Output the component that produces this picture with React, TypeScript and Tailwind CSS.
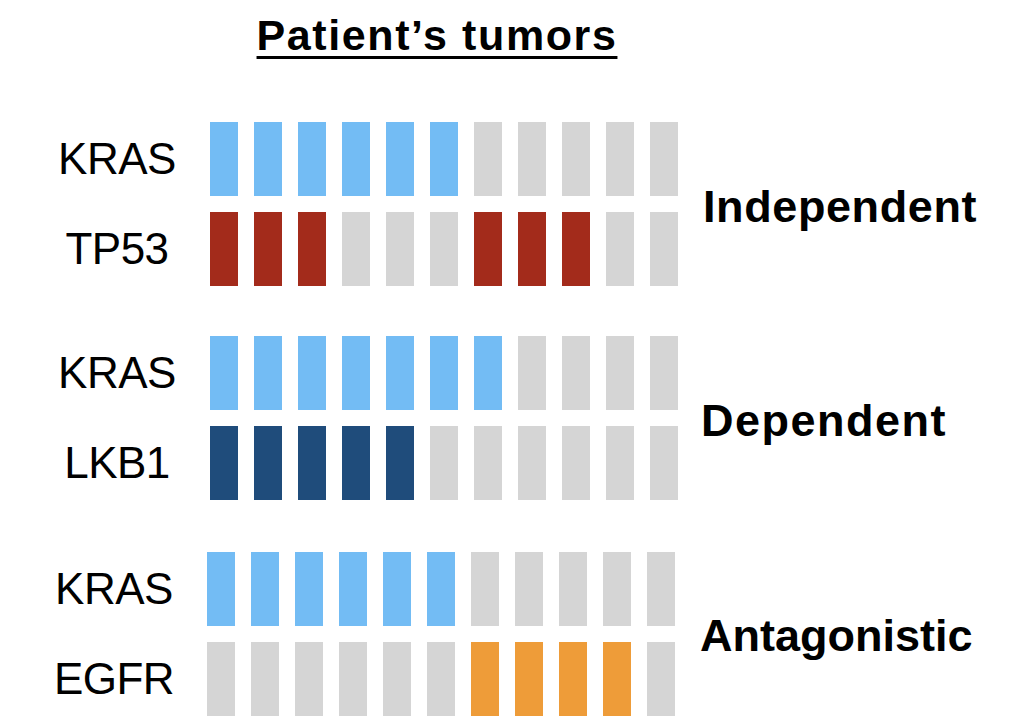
import React from "react";

type Cell = "b" | "r" | "n" | "g" | "o";

const COLORS: Record<Cell, string> = {
  b: "bg-[#73bcf4]",
  r: "bg-[#a32b1b]",
  n: "bg-[#1f4c7b]",
  g: "bg-[#d5d5d5]",
  o: "bg-[#ee9c39]",
};

const groups = [
  {
    label: "Independent",
    className: "",
    labelClass: "ml-[25px] pt-[5px] tracking-[0.6px]",
    rows: [
      { gene: "KRAS", cells: "bbbbbbggggg" },
      { gene: "TP53", cells: "rrrgggrrrgg" },
    ],
  },
  {
    label: "Dependent",
    className: "mt-[50px]",
    labelClass: "ml-[23px] pt-[4px] tracking-[1.5px]",
    rows: [
      { gene: "KRAS", cells: "bbbbbbbgggg" },
      { gene: "LKB1", cells: "nnnnngggggg" },
    ],
  },
  {
    label: "Antagonistic",
    className: "mt-[52px] ml-[-3px]",
    labelClass: "ml-[25px] pt-[2px]",
    rows: [
      { gene: "KRAS", cells: "bbbbbbggggg" },
      { gene: "EGFR", cells: "ggggggoooog" },
    ],
  },
];

function BarRow({ gene, cells }: { gene: string; cells: string }) {
  return (
    <div className="flex h-[74px] items-center">
      <div className="w-[186px] text-center text-[44px] leading-none tracking-[-0.5px] text-black">
        {gene}
      </div>
      <div className="flex h-full gap-[16px]">
        {cells.split("").map((c, i) => (
          <div key={i} className={`h-full w-[28px] ${COLORS[c as Cell]}`} />
        ))}
      </div>
    </div>
  );
}

export default function App() {
  return (
    <div className="w-[1016px] h-[718px] overflow-hidden bg-white font-['Liberation_Sans',Arial,sans-serif] text-black">
      <div className="h-[122px] pt-[14px] pl-[210px]">
        <div className="w-[451px] pl-[3px] text-center">
          <span className="text-[43px] font-bold leading-none tracking-[1.6px] underline decoration-[3px] underline-offset-[6px]">
            Patient’s tumors
          </span>
        </div>
      </div>

      <div className="flex flex-col pl-[24px]">
        {groups.map((g) => (
          <div key={g.label} className={`flex items-center ${g.className}`}>
            <div className="flex flex-col gap-[16px]">
              {g.rows.map((r) => (
                <BarRow key={r.gene} gene={r.gene} cells={r.cells} />
              ))}
            </div>
            <div className={`text-[45px] font-bold leading-none ${g.labelClass}`}>
              {g.label}
            </div>
          </div>
        ))}
      </div>
    </div>
  );
}
